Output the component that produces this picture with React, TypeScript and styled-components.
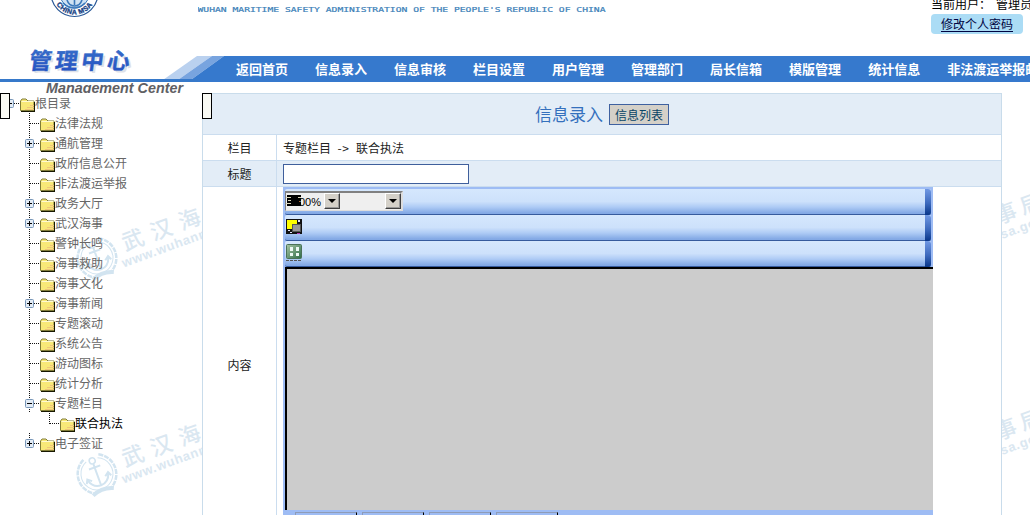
import React from 'react';
import styled, { createGlobalStyle, css } from 'styled-components';

const Global = createGlobalStyle`
  * { box-sizing: border-box; }
  html, body { margin: 0; padding: 0; background: #fff; overflow: hidden; }
  body { font: 12px/20px "Noto Sans CJK SC", "Liberation Sans", sans-serif; color: #222; }
`;

const Page = styled.div`
  width: 1030px;
  height: 515px;
  overflow: hidden;
  display: flex;
  flex-direction: column;
`;

const Header = styled.header`
  height: 93px;
  flex: none;
  display: flex;
`;

const Brand = styled.div`
  width: 198px;
  flex: none;
  height: 93px;
`;

const HeaderMain = styled.div`
  width: 832px;
  flex: none;
  height: 82px;
`;

const TopLine = styled.div`
  height: 56px;
  display: flex;
  justify-content: space-between;
`;

const Nav = styled.nav`
  height: 26px;
  background: #3679cd;
  display: flex;
  gap: 27px;
`;

const NavItem = styled.a`
  flex: none;
  color: #fff;
  font-size: 13px;
  line-height: 26px;
  font-weight: 700;
  white-space: nowrap;

  &:first-of-type {
    margin-left: -15px;
  }
`;

const UserBox = styled.div`
  width: 99px;
  flex: none;
  color: #000;
  white-space: nowrap;
`;

const UserName = styled.div`
  height: 14px;
  line-height: 20px;
  margin-top: -6px;
  margin-bottom: 6px;
`;

const UserLabel = styled.span`
  display: inline-block;
  width: 65px;
`;

const PasswordLink = styled.a`
  display: flex;
  width: 92px;
  height: 20px;
  justify-content: center;
  border-radius: 4px;
  background: #abdcf5;
  color: #000442;
  line-height: 20px;
  text-decoration: underline;
  text-underline-offset: 2px;
`;

const Body = styled.div`
  flex: none;
  height: 422px;
  display: flex;
`;

const Sidebar = styled.aside`
  width: 202px;
  flex: none;
  position: relative;
`;

const Tree = styled.div`
  position: relative;
  display: flex;
  flex-direction: column;
`;

const Row = styled.div<{ $indent: number; $active?: boolean }>`
  height: 20px;
  display: flex;
  padding-left: ${p => p.$indent}px;
  color: ${p => (p.$active ? '#000' : '#666')};
  line-height: 20px;
  white-space: nowrap;
`;

const Handle = styled.div<{ $left: number; $top?: number }>`
  position: absolute;
  left: ${p => p.$left}px;
  top: ${p => p.$top || 0}px;
  width: 10px;
  height: 26px;
  border: 1px solid #000;
  background: #fafaf4;
`;

const Panel = styled.main`
  width: 800px;
  flex: none;
  position: relative;
  background: #fff;
  border: 1px solid #c9dceb;
  border-bottom: 0;
`;

const PanelTitle = styled.div`
  height: 40px;
  background: #e3edf7;
  display: flex;
  align-items: center;
  padding-left: 332px;
  gap: 6px;
`;

const Title = styled.span`
  font-size: 17px;
  line-height: 22px;
  color: #3470bd;
  width: 68px;
  white-space: nowrap;
`;

const ListButton = styled.button`
  width: 60px;
  height: 21px;
  margin: 1px 0 0;
  padding: 0;
  border: 1px solid #3f61a0;
  background: #d4d0c8;
  color: #074466;
  font: 12px/19px "Noto Sans CJK SC", sans-serif;
`;

const FormRow = styled.div<{ $tint?: boolean; $height: number }>`
  height: ${p => p.$height}px;
  display: flex;
  border-top: 1px solid #cbddef;
  background: ${p => (p.$tint ? '#e3edf7' : '#fff')};
`;

const Label = styled.div<{ $pad?: number }>`
  width: 74px;
  flex: none;
  border-right: 1px solid #cbddef;
  text-align: center;
  line-height: 25px;
  padding-top: ${p => p.$pad || 0}px;
`;

const Field = styled.div`
  padding-left: 6px;
  line-height: 25px;
  white-space: nowrap;
`;

const PathArrow = styled.span`
  display: inline-block;
  width: 25px;
  text-align: center;
  letter-spacing: 0.5px;
`;

const TitleInput = styled.input`
  display: block;
  width: 186px;
  height: 20px;
  margin-top: 3px;
  border: 1px solid #3f5f9c;
  background: #fff;
  outline: 0;
`;

const Editor = styled.div`
  width: 650px;
  height: 329px;
  background: #9ebcf4;
  padding: 2px 0 0 2px;
`;

const Toolbar = styled.div`
  width: 646px;
  height: 26px;
  display: flex;
  background: linear-gradient(#d5e7fd 0, #cde1fb 50%, #aecbf5 72%, #83a9e5 96%);
  border-bottom: 1px solid #365b9d;
  border-radius: 2px;
  justify-content: space-between;
`;

const EndCap = styled.div`
  width: 6px;
  height: 26px;
  border-radius: 0 3px 3px 0;
  background: linear-gradient(#7098e3, #3c69bd 55%, #083689);
`;

const Selects = styled.div`
  width: 118px;
  height: 20px;
  margin-top: 2px;
  display: flex;
  background: #efefef;
  border-top: 2px solid #808080;
  border-left: 1px solid #808080;
  border-right: 2px solid #ddd;
  border-bottom: 1px solid #ddd;
`;

const SelectBox = styled.div<{ $width: number }>`
  width: ${p => p.$width}px;
  flex: none;
  display: flex;
  justify-content: flex-end;
`;

const SelectValue = styled.span`
  font: 11px/18px "Liberation Sans", sans-serif;
  color: #000;
  margin: 0 3px 0 -4px;
`;

const Arrow = styled.span`
  width: 16px;
  height: 16px;
  background: #d4d0c8;
  border: 1px solid;
  border-color: #fff #404040 #404040 #fff;
  box-shadow: inset -1px -1px #999;
  display: flex;
  align-items: center;
  justify-content: center;
  &::after {
    content: '';
    border: 4px solid transparent;
    border-top-color: #000;
    border-bottom: 0;
  }
`;

const Canvas = styled.div`
  height: 243px;
  border-left: 2px solid #000;
  border-top: 2px solid #000;
  background: #ccc;
`;

const Tabs = styled.div`
  display: flex;
  gap: 5px;
  padding: 2px 0 0 10px;
`;

const Tab = styled.div`
  width: 62px;
  height: 3px;
  border-top: 1px solid #8e9cb8;
  border-left: 1px solid #8e9cb8;
  border-right: 1px solid #000;
`;

const RightMargin = styled.div`
  width: 28px;
  flex: none;
`;

const Art = styled.svg<{ $behind?: boolean }>`
  display: block;
  flex: none;
  ${p => p.$behind && css`
    position: absolute;
    left: 0;
    top: 0;
  `}
`;

const ToolIcon = styled(Art)`
  margin-top: 3px;
`;

type Node = { name: string; toggle?: '+' | '-'; level: number };

const nodes: Node[] = [
  { name: '根目录', toggle: '-', level: 0 },
  { name: '法律法规', level: 1 },
  { name: '通航管理', toggle: '+', level: 1 },
  { name: '政府信息公开', level: 1 },
  { name: '非法渡运举报', level: 1 },
  { name: '政务大厅', toggle: '+', level: 1 },
  { name: '武汉海事', toggle: '+', level: 1 },
  { name: '警钟长鸣', level: 1 },
  { name: '海事救助', level: 1 },
  { name: '海事文化', level: 1 },
  { name: '海事新闻', toggle: '+', level: 1 },
  { name: '专题滚动', level: 1 },
  { name: '系统公告', level: 1 },
  { name: '游动图标', level: 1 },
  { name: '统计分析', level: 1 },
  { name: '专题栏目', toggle: '-', level: 1 },
  { name: '联合执法', level: 2 },
  { name: '电子签证', toggle: '+', level: 1 },
];

const menu = ['返回首页', '信息录入', '信息审核', '栏目设置', '用户管理', '管理部门', '局长信箱', '模版管理', '统计信息', '非法渡运举报邮箱'];

function Branch({ toggle, level, last }: { toggle?: string; level: number; last: boolean }) {
  return (
    <Art width="35" height="20" viewBox="0 0 35 20">
      <g shapeRendering="crispEdges">
        {level > 0 && <path d={level === 2 || last ? 'M9.500 0V11' : 'M9.500 0V20'} stroke="#111" strokeDasharray="1 1" />}
        <path d="M10 10.500H19" stroke="#111" strokeDasharray="1 1" />
      </g>
      {toggle && (
        <g>
          <rect x="5.500" y="6.500" width="8" height="8" rx="1" fill="#e2ebf5" stroke="#7896b8" />
          <path d={toggle === '+' ? 'M7 10.500h5M9.500 8v5' : 'M7 10.500h5'} stroke="#000" />
        </g>
      )}
      <path d="M20.500 17.500V8L22 6h4l2 2h6V17.500z" fill="#f8e878" stroke="#817d36" />
      <path d="M21.500 8.500h12" stroke="#fffad0" />
      <path d="M25 16.500h9M27 14.500h7M30 12.500h4" stroke="#efc47b" />
      <path d="M21 18.500h14M34.500 9v10" stroke="#171700" />
    </Art>
  );
}

function Mark({ x, y }: { x: number; y: number }) {
  return (
    <g transform={`translate(${x} ${y}) rotate(-20)`} fill="#dae7f1">
      <g fill="none" stroke="#d2e4f0">
        <path d="M-8-18A20 20 0 0 0-8 18M8-18A20 20 0 0 1 8 18" strokeWidth="2.500" strokeDasharray="5 1" />
        <path d="M-6-15A16 16 0 1 0 6-15" strokeWidth="1" />
        <circle cy="-14" r="3" strokeWidth="1.500" />
        <path d="M0-11V12M-6-7H6M-11 3Q-8 12 0 12Q8 12 11 3M-13 6l2-4 4 3M13 6l-2-4-4 3" strokeWidth="2" />
        <path d="M-11 19Q0 14 11 19" strokeWidth="4" />
      </g>
      <text x="29" y="3" fontSize="22" fontWeight="500" letterSpacing="8" fontFamily="Noto Sans CJK SC">武汉海</text>
      <text x="22" y="18" fontSize="13" fontWeight="700" letterSpacing="0.700" fontFamily="Liberation Sans">www.wuhanm</text>
    </g>
  );
}

function RightMark({ y }: { y: number }) {
  return (
    <g transform={`translate(0 ${y}) rotate(-20)`} fill="#dae7f1">
      <text x="-5" y="2" fontSize="22" fontWeight="500" letterSpacing="5" fontFamily="Noto Sans CJK SC">事局</text>
      <text x="-6" y="17" fontSize="13" fontWeight="700" letterSpacing="0.700" fontFamily="Liberation Sans">sa.gov</text>
    </g>
  );
}

function Stripes() {
  return (
    <g>
      <path d="M160 82L197 56H212L175 82z" fill="#bad1ef" />
      <path d="M175 82L212 56H224L188 82z" fill="#78a4df" />
      <path d="M188 82L224 56V82z" fill="#3679cd" />
    </g>
  );
}

function Logo() {
  return (
    <Art width="198" height="93" viewBox="0 0 198 93">
      <defs>
        <path id="ring" d="M53-7A21.500 21.500 0 0 0 96-7" />
        <linearGradient id="word" x2="0" y2="1"><stop stopColor="#3974cc" /><stop offset="1" stopColor="#244dc0" /></linearGradient>
      </defs>
      <circle cx="74.500" cy="-7" r="23.500" fill="#fff" stroke="#285796" strokeWidth="1.200" />
      <circle cx="74.500" cy="-7" r="15" fill="#cfe2f3" stroke="#3b78ba" />
      <path d="M74.500-7V5M67 0q2 6 7.500 6Q80 6 82 0M63 3q5 5 11 5t11-5" fill="none" stroke="#3b78ba" strokeWidth="1.600" />
      <text fontFamily="Liberation Sans" fontWeight="700" fontSize="7" letterSpacing="0.400" fill="#163f83" stroke="#163f83" strokeWidth="0.300" textAnchor="middle">
        <textPath href="#ring" startOffset="50%">CHINA MSA</textPath>
      </text>
      <Stripes />
      <g transform="skewX(-8)" fontFamily="Noto Sans CJK SC" fontWeight="700" fontSize="22.500" letterSpacing="3.500">
        <text x="40.500" y="71" fill="#dde1e9">管理中心</text>
        <text x="38" y="69" fill="url(#word)" stroke="#2c5fc5" strokeWidth="0.400">管理中心</text>
      </g>
      <path d="M0 79H198V82H0z" fill="#3679ca" />
      <text x="46" y="92.500" fontFamily="Liberation Sans" fontStyle="italic" fontWeight="700" fontSize="14.500" fill="#606064" textLength="137" lengthAdjust="spacingAndGlyphs">Management Center</text>
    </Art>
  );
}

export default function App() {
  return (
    <>
      <Global />
      <Page>
        <Header>
          <Brand><Logo /></Brand>
          <HeaderMain>
            <TopLine>
              <Art width="420" height="56">
                <g transform="scale(1 .82)">
                  <text x="-0.500" y="14.800" fontFamily="DejaVu Sans Mono" fontSize="9" fill="#3c7fb8" stroke="#3c7fb8" strokeWidth="0.250" textLength="408" lengthAdjust="spacingAndGlyphs">WUHAN MARITIME SAFETY ADMINISTRATION OF THE PEOPLE'S REPUBLIC OF CHINA</text>
                </g>
              </Art>
              <UserBox>
                <UserName><UserLabel>当前用户：</UserLabel>管理员</UserName>
                <PasswordLink>修改个人密码</PasswordLink>
              </UserBox>
            </TopLine>
            <Nav>
              <Art width="26" height="26" viewBox="198 56 26 26"><path d="M198 56h26v26h-26z" fill="#fff" /><Stripes /></Art>
              {menu.map(item => <NavItem key={item}>{item}</NavItem>)}
            </Nav>
          </HeaderMain>
        </Header>
        <Body>
          <Sidebar>
            <Art $behind width="202" height="422"><Mark x={97} y={165} /><Mark x={97} y={381} /></Art>
            <Tree>
              {nodes.map((node, index) => (
                <Row key={node.name} $indent={node.level * 20} $active={node.level === 2}>
                  <Branch toggle={node.toggle} level={node.level} last={index === nodes.length - 1} />{node.name}
                </Row>
              ))}
            </Tree>
            <Handle $left={0} />
          </Sidebar>
          <Panel>
            <PanelTitle><Title>信息录入</Title><ListButton>信息列表</ListButton></PanelTitle>
            <FormRow $height={26}><Label>栏目</Label><Field>专题栏目<PathArrow>-&gt;</PathArrow>联合执法</Field></FormRow>
            <FormRow $height={26} $tint><Label>标题</Label><Field><TitleInput aria-label="标题" /></Field></FormRow>
            <FormRow $height={330}>
              <Label $pad={165}>内容</Label>
              <Field>
                <Editor>
                  <Toolbar>
                    <Selects>
                      <SelectBox $width={54}>
                        <Art width="17" height="16" shapeRendering="crispEdges">
                          <path d="M1 2h14v11H1z" fill="#000" />
                          <path d="M0 4.500h5M2 7.500h3M0 10.500h5M12 4.500h3M13 8.500h2" stroke="#ddd8ba" />
                        </Art>
                        <SelectValue>00%</SelectValue><Arrow />
                      </SelectBox>
                      <SelectBox $width={61}><Arrow /></SelectBox>
                    </Selects>
                    <EndCap />
                  </Toolbar>
                  <Toolbar>
                    <ToolIcon width="17" height="18" shapeRendering="crispEdges">
                      <path d="M1 1h16v15H1z" fill="#111" /><path d="M2 2h10v9H2z" fill="#ff0" />
                      <path d="M7.500 6.500h8v7h-8z" fill="#999" stroke="#555" />
                      <path d="M13 2h2v2h-2M3 12h2v1H3M5 14h2v1H5" fill="#e4e6ff" /><path d="M12 15h3v1h-3z" fill="#b238b4" />
                    </ToolIcon>
                    <EndCap />
                  </Toolbar>
                  <Toolbar>
                    <ToolIcon width="18" height="18">
                      <defs><linearGradient id="green" x2="1" y2="1"><stop stopColor="#a8c6a6" /><stop offset="1" stopColor="#2e6c48" /></linearGradient></defs>
                      <rect x="1.500" y="0.500" width="15" height="14" rx="1" fill="url(#green)" stroke="#4a7258" />
                      <path d="M5 3h3v4H5zM11 3h3v4h-3zM5 9h3v3H5zM11 9h3v3h-3z" fill="#edf9f5" />
                      <path d="M1 16.500h15" stroke="#555" strokeDasharray="3 1" />
                    </ToolIcon>
                    <EndCap />
                  </Toolbar>
                  <Canvas />
                  <Tabs><Tab /><Tab /><Tab /><Tab /></Tabs>
                </Editor>
              </Field>
            </FormRow>
            <Handle $left={-1} $top={-1} />
          </Panel>
          <RightMargin>
            <Art width="28" height="422"><RightMark y={128} /><RightMark y={344} /></Art>
          </RightMargin>
        </Body>
      </Page>
    </>
  );
}
